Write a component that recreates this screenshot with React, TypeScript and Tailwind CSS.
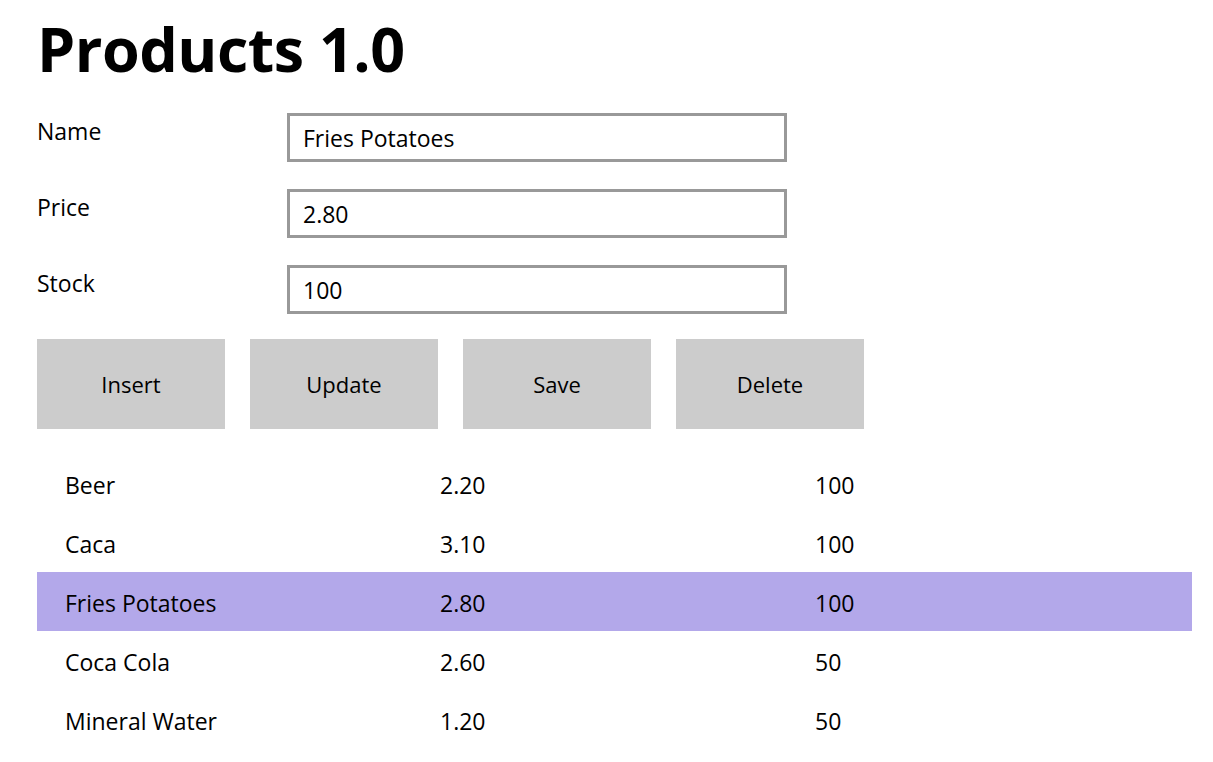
const font = { fontFamily: '"Open Sans", "Noto Sans", sans-serif' };

type Producto = { nombre: string; precio: string; stock: number };

const PRODUCTOS: Producto[] = [
  { nombre: 'Beer', precio: '2.20', stock: 100 },
  { nombre: 'Caca', precio: '3.10', stock: 100 },
  { nombre: 'Fries Potatoes', precio: '2.80', stock: 100 },
  { nombre: 'Coca Cola', precio: '2.60', stock: 50 },
  { nombre: 'Mineral Water', precio: '1.20', stock: 50 },
];

const CAMPOS = [
  { label: 'Name', valor: 'Fries Potatoes' },
  { label: 'Price', valor: '2.80' },
  { label: 'Stock', valor: '100' },
];

export default function App() {
  const seleccionado = 2;
  return (
    <div className="min-h-[762px] w-[1213px] bg-white pl-[37px] pr-[21px] text-black" style={font}>
      <h1 className="pt-[9px] text-[61px] leading-[80px] font-bold tracking-[-0.5px]">Products 1.0</h1>

      <div className="mt-[24px] flex flex-col gap-[27px]">
        {CAMPOS.map((c) => (
          <div key={c.label} className="flex items-start">
            <span className="mt-[3px] w-[250px] text-[23px] leading-[30px]">{c.label}</span>
            <input
              readOnly
              value={c.valor}
              className="h-[49px] w-[500px] border-[3px] border-[#999999] bg-white px-[13px] text-[23px] outline-none"
              style={font}
            />
          </div>
        ))}
      </div>

      <div className="mt-[25px] flex gap-[25px]">
        {['Insert', 'Update', 'Save', 'Delete'].map((b) => (
          <button key={b} className="h-[90px] w-[188px] bg-[#cccccc] text-[22px]" style={font}>
            {b}
          </button>
        ))}
      </div>

      <div className="mt-[25px] flex flex-col">
        {PRODUCTOS.map((p, i) => (
          <div
            key={p.nombre}
            className={`flex h-[59px] items-center pt-[3px] text-[23px] ${i === seleccionado ? 'bg-[#b3a8ea]' : ''}`}
          >
            <span className="w-[403px] pl-[28px]">{p.nombre}</span>
            <span className="w-[375px]">{p.precio}</span>
            <span>{p.stock}</span>
          </div>
        ))}
      </div>
    </div>
  );
}
